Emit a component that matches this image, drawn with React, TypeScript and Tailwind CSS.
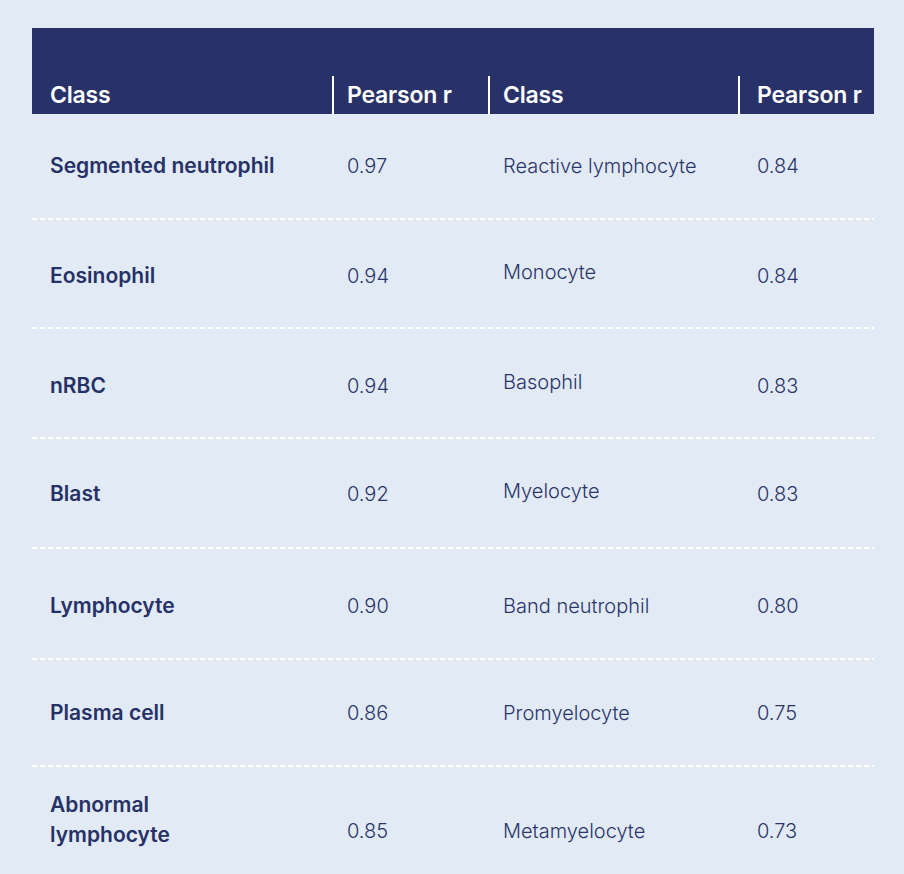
import React from "react";

type Row = {
  a: React.ReactNode;
  av: string;
  b: string;
  bv: string;
  h: string;
  aCls?: string;
  bCls?: string;
  last?: boolean;
};

const rows: Row[] = [
  { a: "Segmented neutrophil", av: "0.97", b: "Reactive lymphocyte", bv: "0.84", h: "h-[104px]" },
  { a: "Eosinophil", av: "0.94", b: "Monocyte", bv: "0.84", h: "h-[107px]", aCls: "pt-[4px]", bCls: "pb-[3px]" },
  { a: "nRBC", av: "0.94", b: "Basophil", bv: "0.83", h: "h-[108px]", aCls: "pt-[5px]", bCls: "pb-[2px]" },
  { a: "Blast", av: "0.92", b: "Myelocyte", bv: "0.83", h: "h-[108px]", aCls: "pt-[2px]", bCls: "pb-[4px]" },
  { a: "Lymphocyte", av: "0.90", b: "Band neutrophil", bv: "0.80", h: "h-[109px]", aCls: "pt-[5px]", bCls: "pt-[5px]" },
  { a: "Plasma cell", av: "0.86", b: "Promyelocyte", bv: "0.75", h: "h-[105px]" },
  {
    a: (
      <>
        Abnormal
        <br />
        lymphocyte
      </>
    ),
    av: "0.85",
    b: "Metamyelocyte",
    bv: "0.73",
    h: "h-[128px]",
    aCls: "pb-[22px]",
    last: true,
  },
];

const font = { fontFamily: "Inter, 'Liberation Sans', sans-serif" };

function Dash() {
  return <div className="h-[2px] w-full bg-[repeating-linear-gradient(90deg,#ffffff_0px,#ffffff_5px,transparent_5px,transparent_8px)]" />;
}

export default function App() {
  return (
    <div className="min-h-screen bg-[#e2eaf6] pt-[28px] pb-[40px]" style={font}>
      <div className="ml-[32px] w-[842px]">
        {/* header */}
        <div className="bg-[#283269] pt-[48px] flex text-white text-[23px] font-semibold tracking-[-0.2px]">
          <div className="w-[300px] h-[38px] flex items-center pl-[18px]">Class</div>
          <div className="w-[156px] h-[38px] flex items-center pl-[13px] border-l-2 border-white">Pearson r</div>
          <div className="w-[250px] h-[38px] flex items-center pl-[13px] border-l-2 border-white">Class</div>
          <div className="flex-1 h-[38px] flex items-center pl-[17px] border-l-2 border-white">Pearson r</div>
        </div>
        {/* body */}
        {rows.map((r, i) => (
          <div key={i}>
            <div className={`flex items-center ${r.h} text-[20px] text-[#2a3569]`}>
              <div className={`w-[300px] pl-[18px] text-[21px] font-semibold leading-[30px] text-[#263166] ${r.aCls ?? ""}`}>{r.a}</div>
              <div className={`w-[156px] pl-[15px] font-light ${r.aCls && !r.last ? r.aCls : ""}`}>{r.av}</div>
              <div className={`w-[250px] pl-[15px] font-light ${r.bCls ?? ""}`}>{r.b}</div>
              <div className={`flex-1 pl-[19px] font-light ${r.aCls && !r.last ? r.aCls : ""}`}>{r.bv}</div>
            </div>
            {!r.last && <Dash />}
          </div>
        ))}
      </div>
    </div>
  );
}
